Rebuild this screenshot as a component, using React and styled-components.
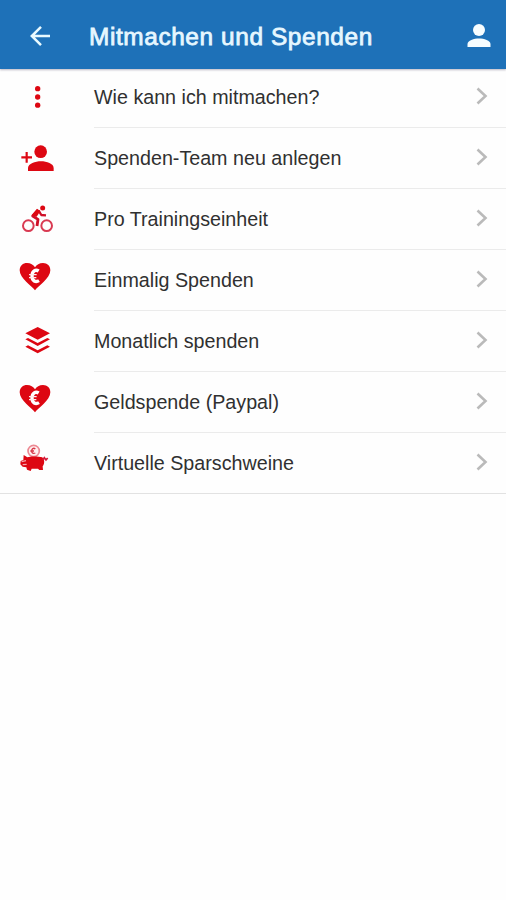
import styled, { createGlobalStyle } from 'styled-components';

const HeartEuro = () => (
  <Icon viewBox='0 -15 180 180'>
    <path
      d='M75 106 C66 94 29 70 29 46 C29 32 39 24 51 24 C62 24 70 29 75 37 C80 29 88 24 99 24 C112 24 121 33 121 46 C121 70 84 94 75 106Z'
      fill='#dd0712'
    />
    <path
      d='M86 48 C77 42 66 48 66 63 C66 78 77 83 87 77'
      fill='none'
      stroke='#fff'
      strokeWidth='10'
    />
    <path d='M57 59H80M57 68H79' stroke='#ffe9ea' strokeWidth='3.500' />
  </Icon>
);

const Dots = () => (
  <Icon viewBox='0 -24 180 180'>
    <circle cx='83' cy='41' r='8' />
    <circle cx='83' cy='66' r='8' />
    <circle cx='83' cy='90.500' r='8' />
  </Icon>
);

const PersonAdd = () => (
  <Icon viewBox='0 -21 180 180'>
    <circle cx='92' cy='50' r='19' />
    <path d='M54 108V99C54 86 76 79 93 79S131 86 131 99V108Z' />
    <path d='M34 67H66M50 51V83' stroke='#dd0712' strokeWidth='6.500' />
  </Icon>
);

const Cyclist = () => (
  <Icon viewBox='0 -18 180 180'>
    <g fill='none' stroke='#d93a52' strokeWidth='6'>
      <circle cx='55' cy='92' r='16' />
      <circle cx='110' cy='92' r='16' />
    </g>
    <circle cx='98' cy='39' r='7.500' />
    <path
      d='M84 46 L68 63 L84 73 L81 93'
      fill='none'
      stroke='#cf1028'
      strokeWidth='8.500'
      strokeLinejoin='round'
    />
    <path
      d='M86 47 L94 60 L108 61'
      fill='none'
      stroke='#cf1028'
      strokeWidth='7'
      strokeLinejoin='round'
    />
    <path d='M81 41 L91 48 L80 65 L65 61Z' />
  </Icon>
);

const Layers = () => (
  <Icon viewBox='0 -21 180 180'>
    <path d='M83 27 L120 46 L83 65 L46 46Z' />
    <path d='M46 64 L54 60 L83 75 L112 60 L120 64 L83 84Z' />
    <path d='M46 86 L54 82 L83 97 L112 82 L120 86 L83 106Z' />
  </Icon>
);

const PiggyBank = () => (
  <Icon viewBox='0 -6 180 180'>
    <circle cx='71' cy='48' r='17' fill='#fff0f0' stroke='#ec8993' strokeWidth='5' />
    <path
      d='M76 42C70 37 65 42 65 48S70 57 76 54M61 48H72'
      fill='none'
      stroke='#d83a4a'
      strokeWidth='4'
    />
    <path d='M41 60 L52 67 C62 63 86 64 97 67 L102 75 C104 84 101 90 98 94 L99 105 L88 105 L84 101 L65 101 L62 108 L51 104 L49 97 L38 95 L31 88 L32 78 L40 75Z' />
    <path d='M98 75 L103 68 L108 75 L113 69' fill='none' stroke='#d51a38' strokeWidth='5' />
    <path d='M35 80 L48 77 M38 89 L50 88' stroke='#f4a5ab' strokeWidth='4' />
  </Icon>
);

const items = [
  { label: 'Wie kann ich mitmachen?', icon: Dots },
  { label: 'Spenden-Team neu anlegen', icon: PersonAdd },
  { label: 'Pro Trainingseinheit', icon: Cyclist },
  { label: 'Einmalig Spenden', icon: HeartEuro },
  { label: 'Monatlich spenden', icon: Layers },
  { label: 'Geldspende (Paypal)', icon: HeartEuro },
  { label: 'Virtuelle Sparschweine', icon: PiggyBank },
];

const App = () => {
  return (
    <>
      <GlobalStyle />
      <Header>
        <BackButton aria-label='Zurück'>
          <svg width='22' height='22' viewBox='0 0 22 22'>
            <path
              d='M21 11H3M12 1.800L2.800 11L12 20.200'
              fill='none'
              stroke='#e9faff'
              strokeWidth='2.500'
            />
          </svg>
        </BackButton>
        <Title>Mitmachen und Spenden</Title>
        <ProfileButton aria-label='Profil'>
          <svg width='24' height='24' viewBox='0 0 24 24' fill='#f7fdff'>
            <circle cx='12' cy='6' r='6' />
            <path d='M0.500 23V20C0.500 16.500 7 14.500 12 14.500S23.500 16.500 23.500 20V23Z' />
          </svg>
        </ProfileButton>
      </Header>
      <List>
        {items.map(({ label, icon: ItemIcon }) => (
          <Row key={label}>
            <ItemIcon />
            <RowBody>
              <Label>{label}</Label>
              <Chevron viewBox='0 0 12 18'>
                <path d='M1.500 1.500L9.500 9L1.500 16.500' />
              </Chevron>
            </RowBody>
          </Row>
        ))}
      </List>
    </>
  );
};

export default App;

const GlobalStyle = createGlobalStyle`
  * {
    box-sizing: border-box;
  }
  body {
    margin: 0;
    background: #fefefe;
    font-family: 'Liberation Sans', Arial, sans-serif;
  }
`;

const Header = styled.header`
  position: relative;
  z-index: 1;
  display: flex;
  align-items: center;
  height: 69px;
  padding: 2px 15px 0 29px;
  background: #1e71b8;
  box-shadow: 0 1px 2px rgba(60, 50, 80, 0.35);
`;

const BackButton = styled.button`
  display: flex;
  width: 60px;
  padding: 0;
  border: 0;
  background: none;
`;

const ProfileButton = styled(BackButton)`
  width: 24px;
  margin-left: auto;
`;

const Title = styled.h1`
  margin: 2px 0 0;
  color: #e6f7ff;
  font-size: 24.4px;
  font-weight: 400;
  letter-spacing: 0.6px;
  line-height: 30px;
  white-space: nowrap;
  -webkit-text-stroke: 0.8px #e6f7ff;
`;

const List = styled.ul`
  margin: -2px 0 0;
  padding: 0;
  list-style: none;
`;

const Row = styled.li`
  display: flex;
  height: 61px;
  padding-left: 10px;

  &:last-child {
    border-bottom: 1px solid #e2e2e2;
  }
`;

const Icon = styled.svg`
  flex: none;
  width: 60px;
  height: 60px;
  fill: #dd0712;
`;

const RowBody = styled.div`
  display: flex;
  flex: 1;
  align-items: center;
  justify-content: space-between;
  margin-left: 24px;
  padding-right: 18px;
  border-bottom: 1px solid #ebebeb;

  ${Row}:last-child & {
    border-bottom: 0;
  }
`;

const Label = styled.span`
  color: #303030;
  font-size: 19.7px;
  line-height: 24px;
  white-space: nowrap;
`;

const Chevron = styled.svg`
  width: 12px;
  height: 18px;
  margin-bottom: 2px;
  fill: none;
  stroke: #bababa;
  stroke-width: 2.6;
`;
